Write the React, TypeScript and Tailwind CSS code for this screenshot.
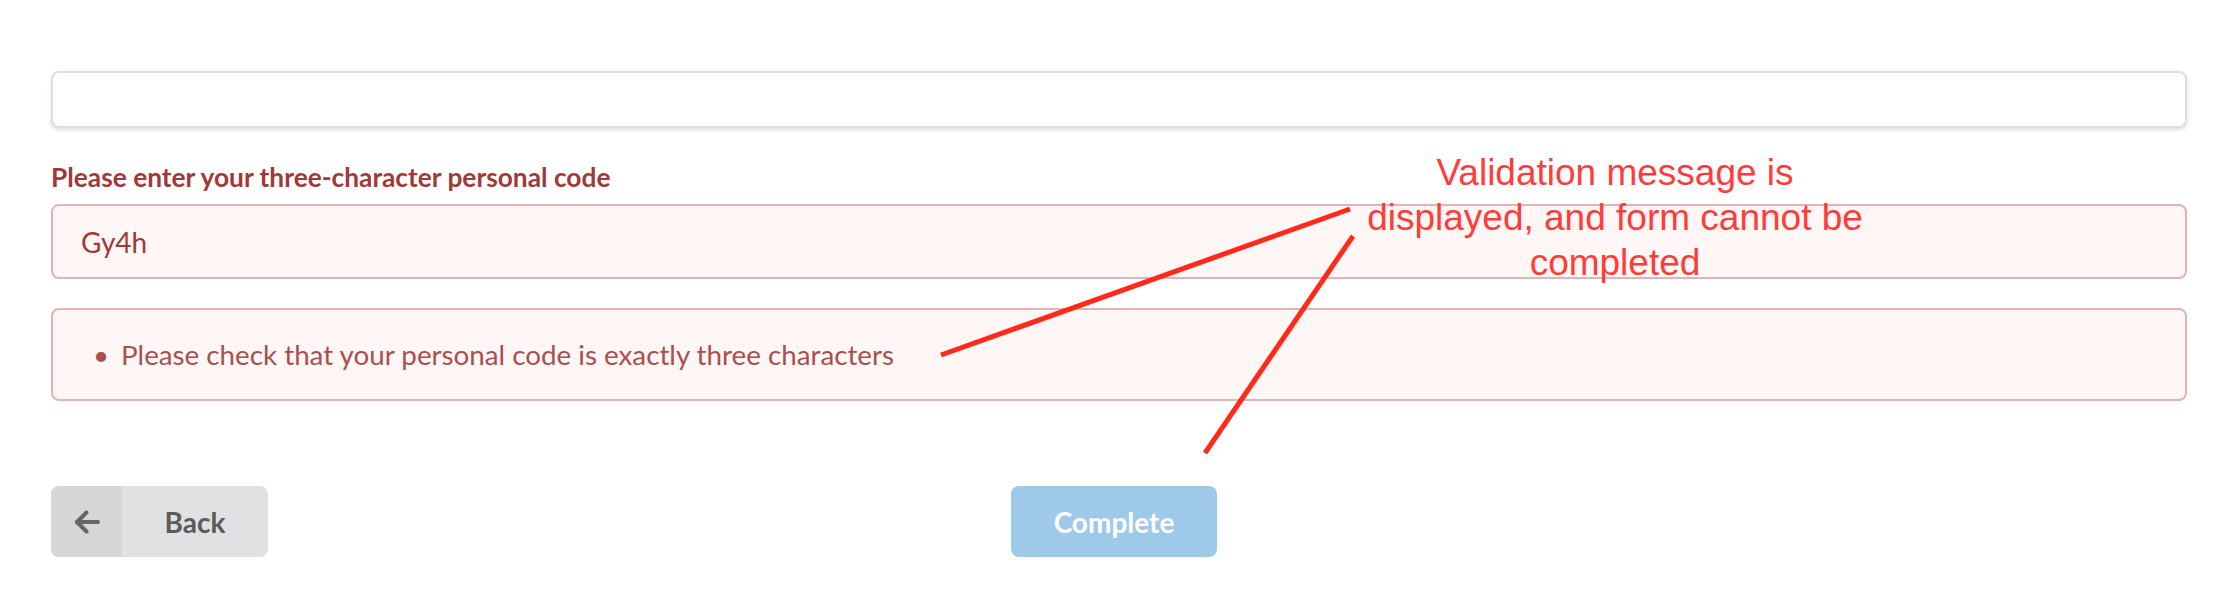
import React from 'react';

export default function App() {
  return (
    <div className="relative min-h-[600px] bg-white pl-[51px] pr-[37px] pt-[71px] font-['Lato','Noto_Sans',sans-serif]">
      {/* previous field, cut off at the top */}
      <div className="h-[57px] rounded-lg border-2 border-[#dedede] bg-white shadow-[0_2px_4px_0_rgba(34,36,38,0.15)]"></div>

      {/* Personal code field */}
      <div className="mt-[33px]">
        <label className="mb-[11px] block text-[26.3px] font-bold leading-[32px] text-[#9f3a38]">
          Please enter your three-character personal code
        </label>
        <div className="flex h-[75px] items-center rounded-lg border-2 border-[#e0b4b4] bg-[#fff6f6] pl-[28px] text-[28px] text-[#9f3a38]">
          Gy4h
        </div>
      </div>

      {/* Validation message */}
      <div className="mt-[29px] flex h-[93px] items-center rounded-lg border-2 border-[#e0b4b4] bg-[#fff6f6] pl-[40px]">
        <ul className="text-[27.75px] leading-[40px] text-[#a9504e]">
          <li className="flex">
            <span className="w-[28px]">•</span>
            <span>Please check that your personal code is exactly three characters</span>
          </li>
        </ul>
      </div>

      {/* Actions */}
      <div className="mt-[85px] flex items-start">
        <button className="flex h-[71px] w-[217px] overflow-hidden rounded-lg bg-[#e0e1e2]">
          <span className="flex h-full w-[71px] items-center justify-center bg-[#d5d6d7]">
            <svg width="26" height="24" viewBox="0 0 26 24" fill="none" stroke="#666666" strokeWidth="4" strokeLinecap="round" strokeLinejoin="round">
              <path d="M24 12H3" />
              <path d="M12.5 2.5L3 12l9.5 9.5" />
            </svg>
          </span>
          <span className="flex h-full flex-1 items-center justify-center text-[28px] font-bold text-[#5b5b5b]">Back</span>
        </button>
        <button className="ml-[743px] h-[71px] w-[206px] rounded-lg bg-[#9fc9e8] text-[28px] font-bold text-white">
          Complete
        </button>
      </div>

      {/* Annotation */}
      <div className="absolute left-[1355px] top-[150px] w-[520px] text-center font-['Liberation_Sans',Arial,sans-serif] text-[37px] leading-[45px] text-[#fc3d39]">
        Validation message is displayed, and form cannot be completed
      </div>
      <svg className="pointer-events-none absolute left-0 top-0" width="2224" height="600" viewBox="0 0 2224 600">
        <line x1="941" y1="355" x2="1350" y2="209" stroke="#ff2a1a" strokeWidth="5" />
        <line x1="1353" y1="236" x2="1205" y2="453" stroke="#ff2a1a" strokeWidth="5" />
      </svg>
    </div>
  );
}
